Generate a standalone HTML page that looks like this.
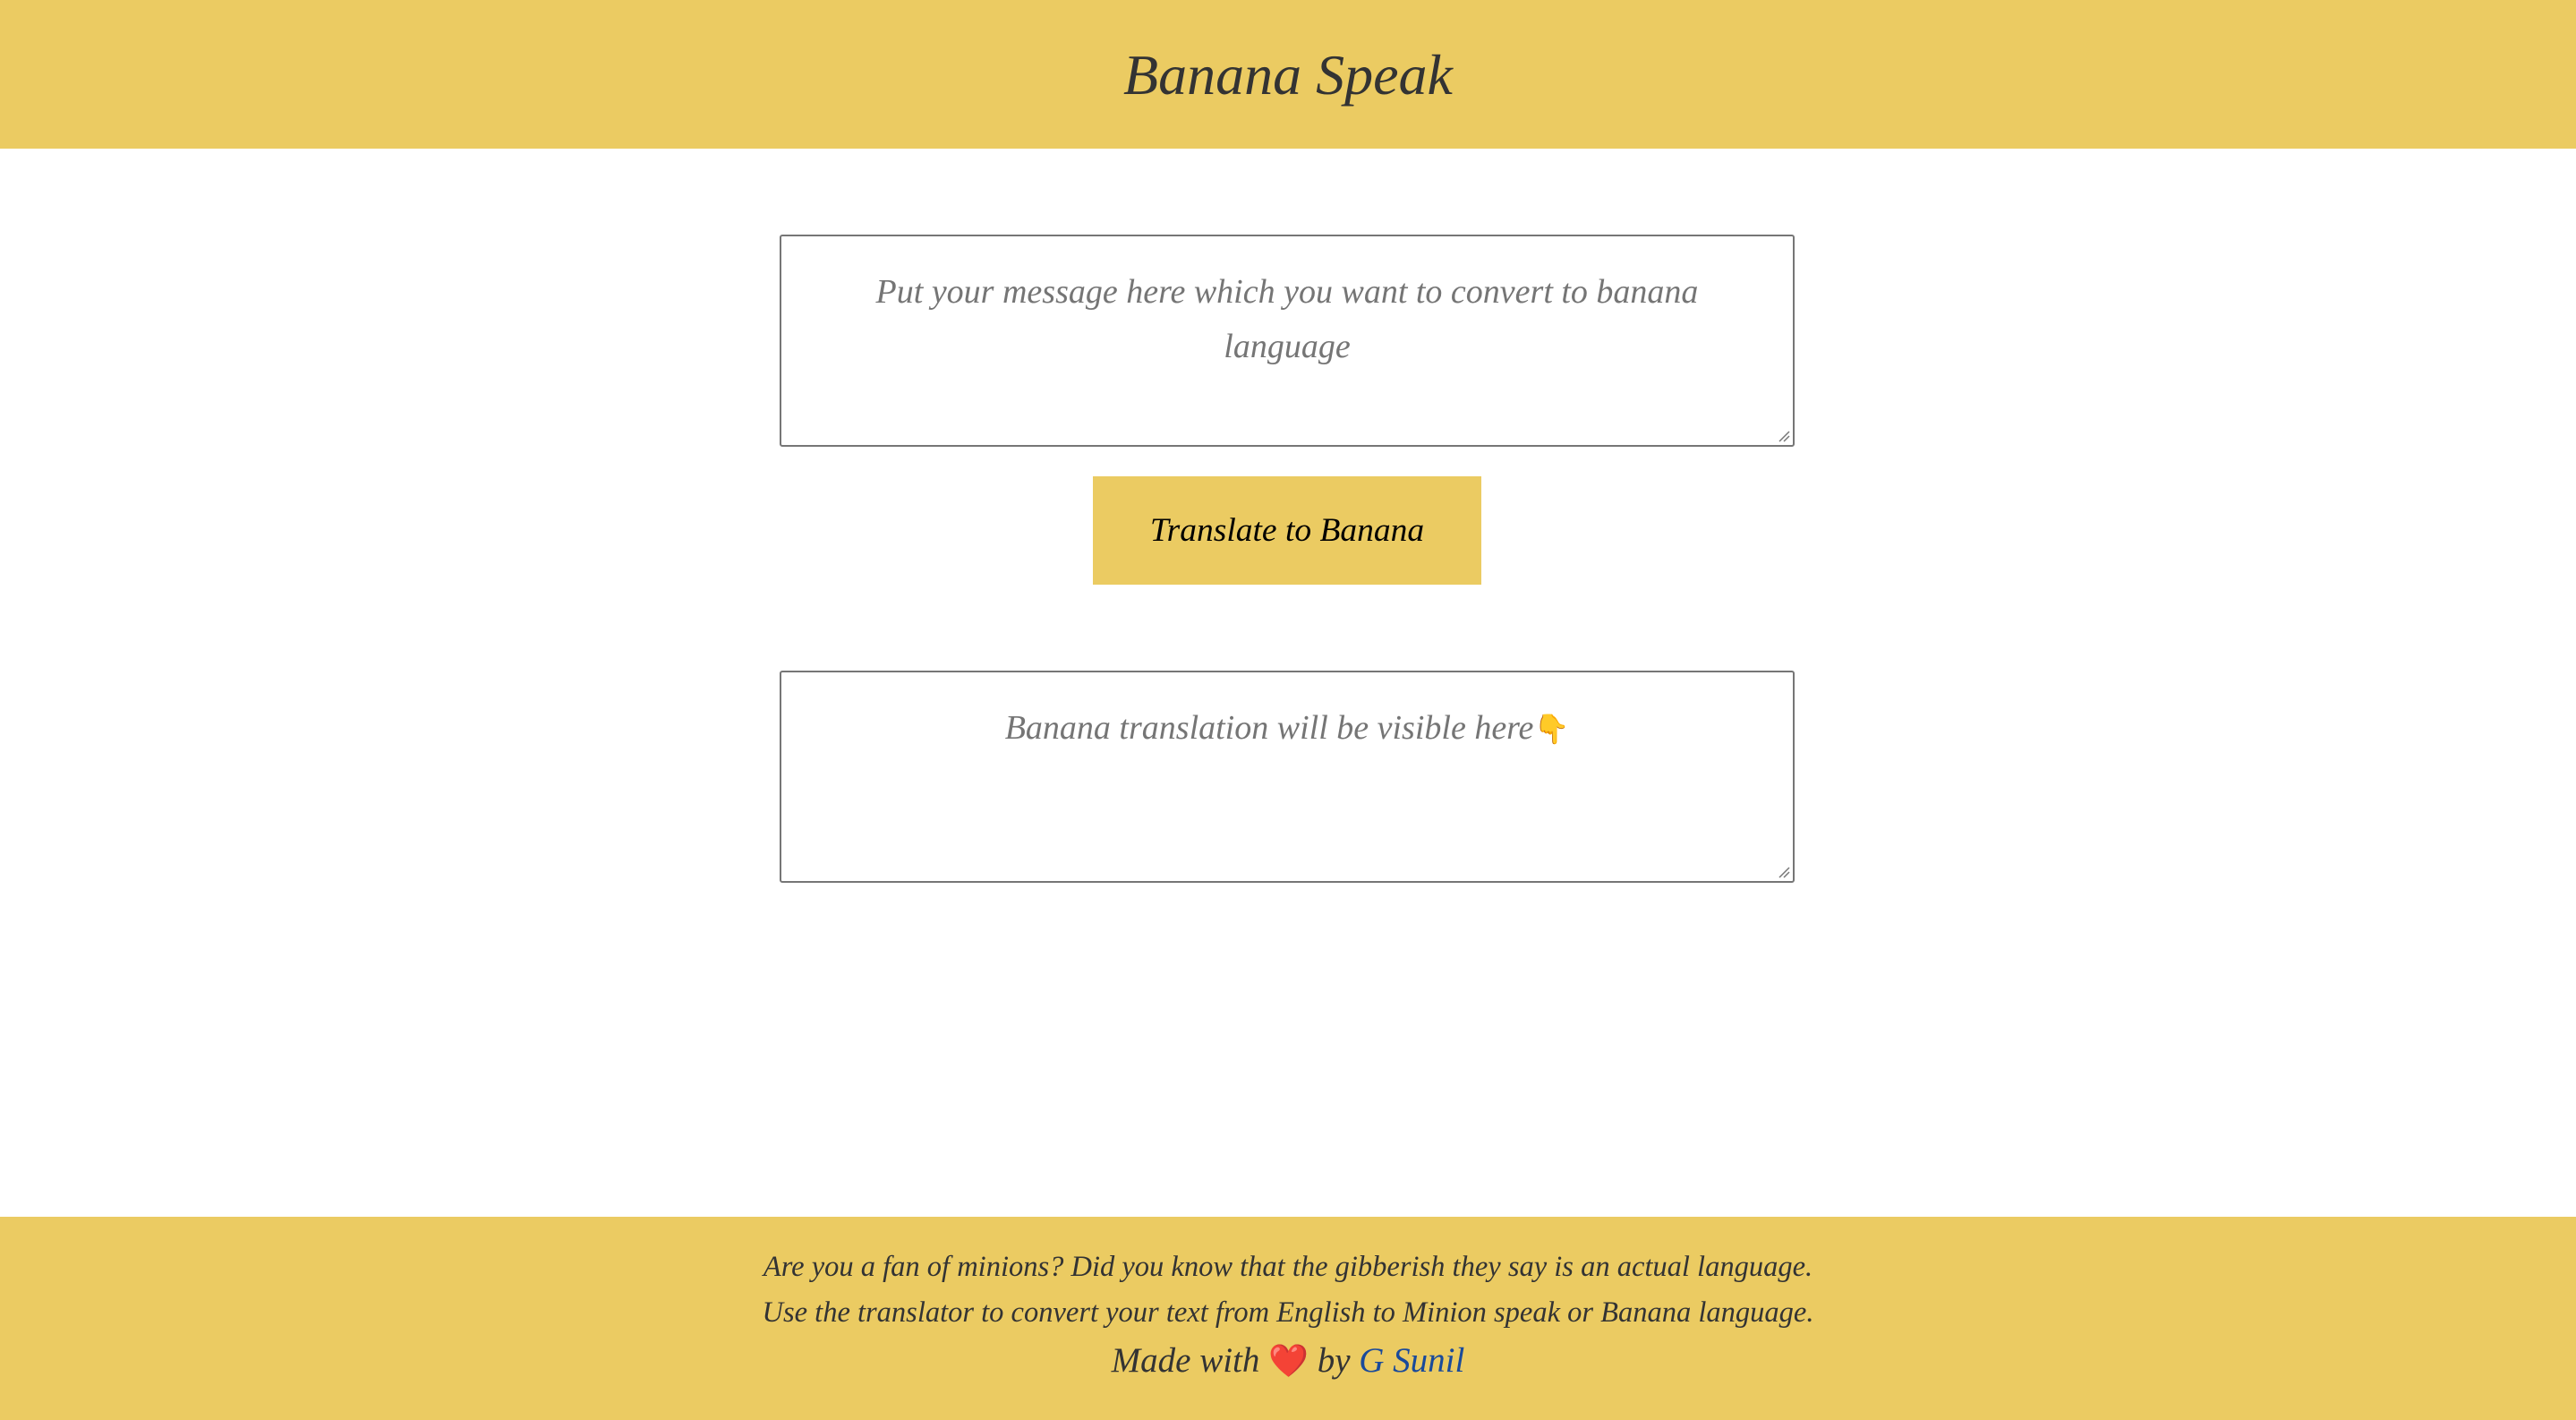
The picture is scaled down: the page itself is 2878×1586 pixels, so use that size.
<!DOCTYPE html>
<html><head><meta charset="utf-8">
<style>
html,body{margin:0;padding:0;width:2878px;height:1586px;background:#fff;overflow:hidden;
font-family:"Liberation Serif",serif;font-style:italic;}
.hdr{position:absolute;left:0;top:0;width:2878px;height:166px;background:#EBCB62;}
.hdr h1{margin:0;position:absolute;left:0;right:0;top:44px;text-align:center;font-weight:normal;font-size:64px;color:#333;line-height:80px;}
.ta{position:absolute;left:871px;width:1134px;border:2px solid #767676;border-radius:3px;box-sizing:border-box;background:#fff;color:#757575;font-size:38px;text-align:center;line-height:61px;}
.grip{position:absolute;right:3px;bottom:3px;width:14px;height:14px;}
.btn{position:absolute;left:1221px;top:532px;width:434px;height:121px;background:#EBCB62;color:#000;font-size:37.5px;text-align:center;line-height:121px;}
.ftr{position:absolute;left:0;top:1359px;width:2878px;height:227px;background:#EBCB62;color:#333;text-align:center;}
.ftr .l{position:absolute;left:0;right:0;font-size:32.5px;}
a{color:#1a4a9a;text-decoration:none;}
</style></head><body>
<div class="hdr"><h1>Banana Speak</h1></div>
<div class="ta" style="top:262px;height:237px;padding:32px 80px 0;">Put your message here which you want to convert to banana language
<svg class="grip" viewBox="0 0 14 14"><path d="M2 13L13 2M7 13L13 7" stroke="#777" stroke-width="1.5"/></svg></div>
<div class="btn">Translate to Banana</div>
<div class="ta" style="top:749px;height:237px;padding:32px 80px 0;">Banana translation will be visible here<span style="font-style:normal;font-size:32px">👇</span>
<svg class="grip" viewBox="0 0 14 14"><path d="M2 13L13 2M7 13L13 7" stroke="#777" stroke-width="1.5"/></svg></div>
<div class="ftr">
<div class="l" style="top:38px;">Are you a fan of minions? Did you know that the gibberish they say is an actual language.</div>
<div class="l" style="top:89px;">Use the translator to convert your text from English to Minion speak or Banana language.</div>
<div class="l" style="top:138px;font-size:39px;">Made with <span style="font-style:normal;font-size:36px">❤️</span> by <a>G Sunil</a></div>
</div>
</body></html>
